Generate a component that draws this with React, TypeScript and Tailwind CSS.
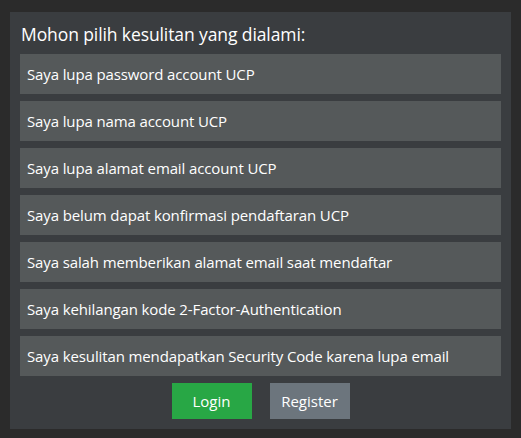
import React from "react";

const items = [
  "Saya lupa password account UCP",
  "Saya lupa nama account UCP",
  "Saya lupa alamat email account UCP",
  "Saya belum dapat konfirmasi pendaftaran UCP",
  "Saya salah memberikan alamat email saat mendaftar",
  "Saya kehilangan kode 2-Factor-Authentication",
  "Saya kesulitan mendapatkan Security Code karena lupa email",
];

export default function App() {
  return (
    <div
      className="min-h-[438px] bg-[#2b2b2b] pt-[12px] px-[10px] pb-[10px] text-white"
      style={{ fontFamily: '"Open Sans", "Noto Sans", sans-serif' }}
    >
      <div className="bg-[#3a3d40] p-[10px]">
        <h1 className="text-[17.5px] tracking-[-0.1px] leading-[24px] mb-[8px] pl-[1px] font-normal">
          Mohon pilih kesulitan yang dialami:
        </h1>
        <div className="flex flex-col gap-[7px]">
          {items.map((t) => (
            <div
              key={t}
              className="h-[40px] bg-[#55595a] flex items-center px-[7px] text-[15px] tracking-[-0.12px]"
            >
              {t}
            </div>
          ))}
        </div>
        <div className="flex justify-center gap-[18px] mt-[7px]">
          <button className="w-[80px] h-[36px] bg-[#28a745] text-[15px] text-white">
            Login
          </button>
          <button className="w-[80px] h-[36px] bg-[#6c757d] text-[15px] text-white">
            Register
          </button>
        </div>
      </div>
    </div>
  );
}
